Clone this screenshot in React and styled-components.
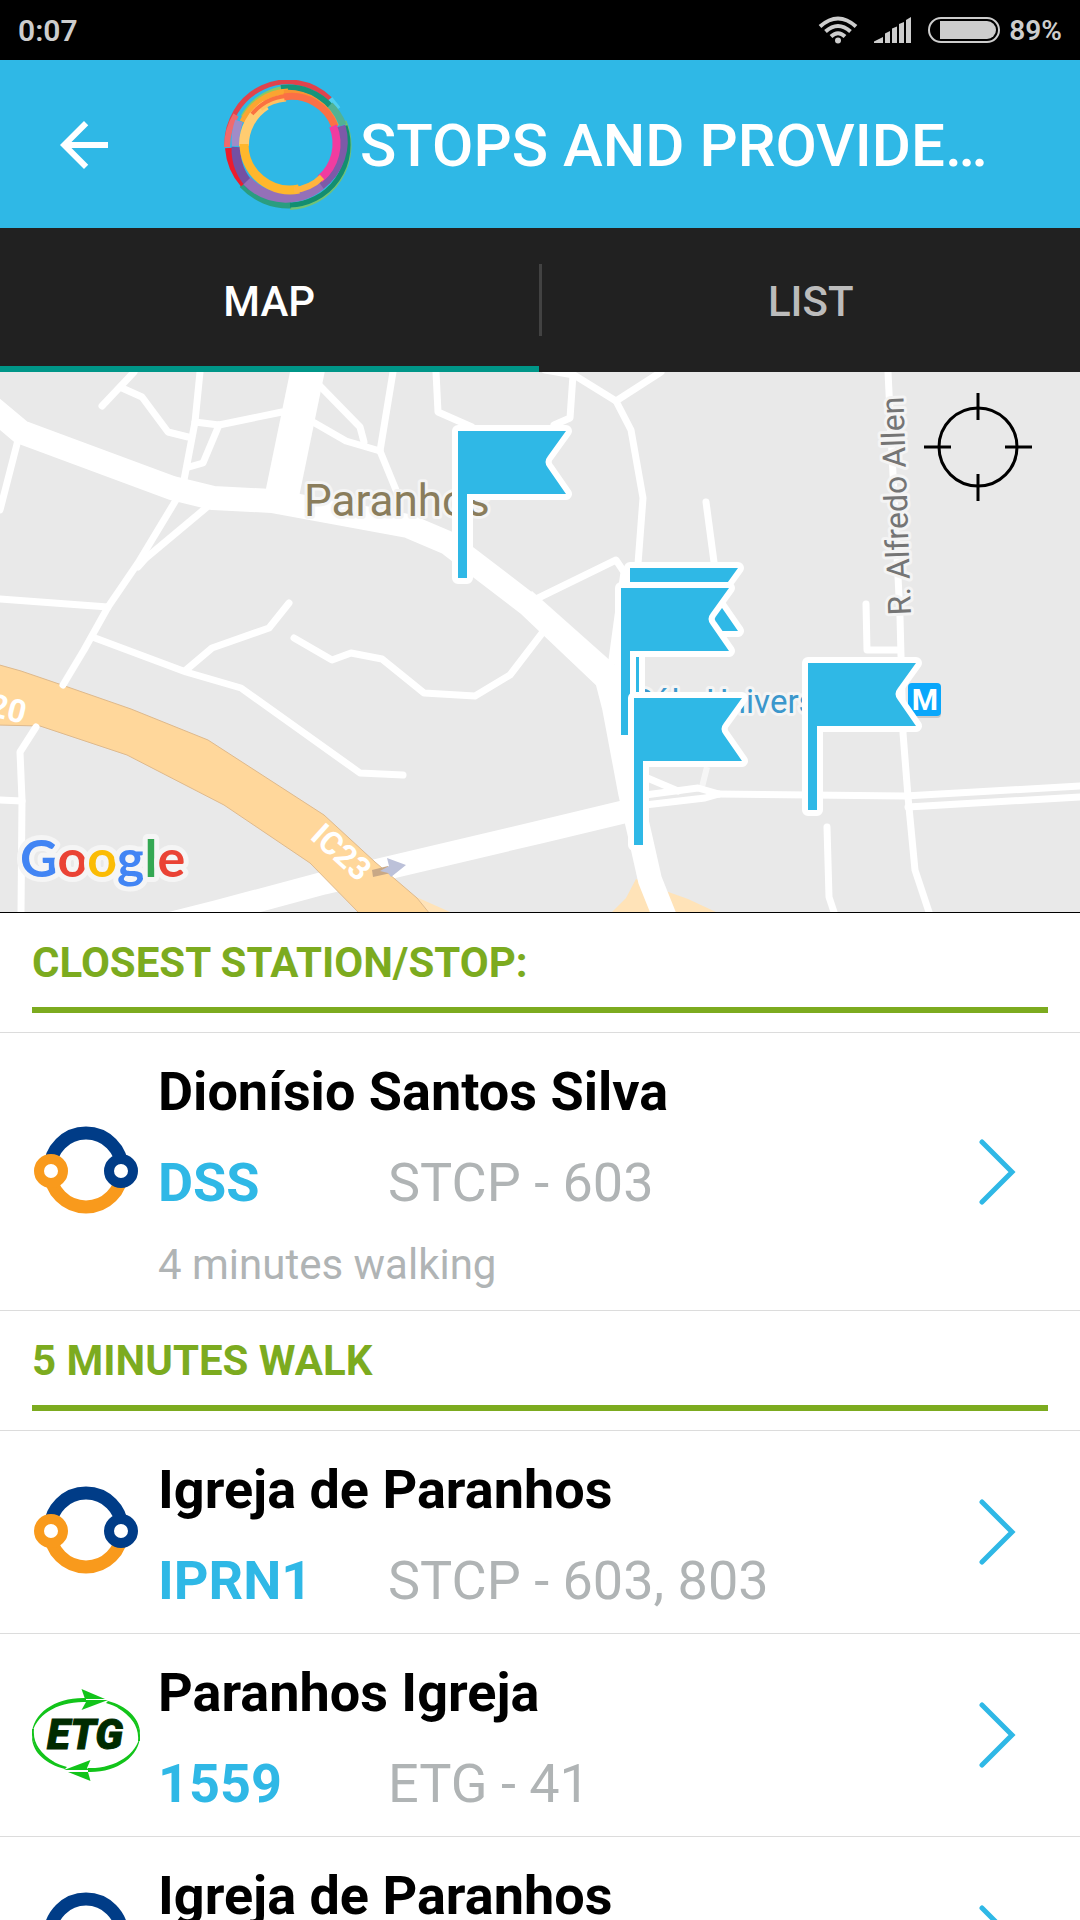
import React, { useState } from 'react';
import styled, { createGlobalStyle } from 'styled-components';

const GlobalStyle = createGlobalStyle`
  * {
    box-sizing: border-box;
  }

  body {
    margin: 0;
    background-color: #fff;
    font-family: Roboto, "Noto Sans", sans-serif;
  }

  button {
    margin: 0;
    padding: 0;
    border: none;
    background: none;
    font-family: inherit;
    cursor: pointer;
  }
`;

const FLAGS = [
  { x: 458, y: 59 },
  { x: 630, y: 196 },
  { x: 621, y: 216 },
  { x: 634, y: 326 },
  { x: 808, y: 291 },
];

// thin streets
const STREETS = [
  'M134 0L102 34',
  'M122 16L142 25L168 60L188 65',
  'M200 0L195 50L184 108',
  'M195 50L219 53L282 40',
  'M219 53L203 91L189 95',
  'M319 13L360 55L364 70',
  'M313 50L346 69L380 79',
  'M393 0L380 79L396 118',
  'M436 0L438 40L472 55',
  'M18 68L0 138',
  'M176 128L138 191L108 235L84 278L63 313',
  'M207 135L146 186L138 195',
  'M0 227L108 235',
  'M95 266L186 300L241 316L360 401L403 403',
  'M186 298L212 276L269 256L289 231',
  'M294 266L332 288L351 281L382 287L424 321L475 324L510 303L546 256',
  'M530 230L616 188L624 200L611 295',
  'M545 -2L574 3L616 29L631 58L643 126L638 192',
  'M616 29L661 0',
  'M573 3L570 46L554 53',
  'M706 130L714 190',
  'M888 0L900 245L903 361L908 425L915 498L929 540',
  'M866 232L867 278L900 278',
  'M827 455L829 525L834 540',
  'M716 422L905 424L1080 414',
  'M908 435L1080 425',
  'M645 405L678 419',
  'M645 423L698 416L719 422',
  'M645 433L705 426L719 422',
  'M36 355L20 380L22 428L21 540',
  'M0 428L22 429',
];

const SECTIONS = [
  {
    title: 'CLOSEST STATION/STOP:',
    stops: [
      {
        id: 'dss',
        provider: 'stcp',
        name: 'Dionísio Santos Silva',
        code: 'DSS',
        lines: 'STCP - 603',
        walk: '4 minutes walking',
      },
    ],
  },
  {
    title: '5 MINUTES WALK',
    stops: [
      { id: 'iprn1', provider: 'stcp', name: 'Igreja de Paranhos', code: 'IPRN1', lines: 'STCP - 603, 803' },
      { id: '1559', provider: 'etg', name: 'Paranhos Igreja', code: '1559', lines: 'ETG - 41' },
      { id: 'iprn2', provider: 'stcp', name: 'Igreja de Paranhos', code: 'IPRN2', lines: 'STCP - 603, 803' },
    ],
  },
];

const WifiIcon = () => (
  <svg width="40" height="28" viewBox="0 0 40 28" fill="none" stroke="#cdcdcd" strokeWidth="4">
    <path d="M2 10.500Q20 -5.500 38 10.500" />
    <path d="M7.500 15.500Q20 4.500 32.500 15.500" />
    <path d="M13 20.500Q20 14 27 20.500" />
    <circle cx="20" cy="24.500" r="3" fill="#cdcdcd" stroke="none" />
  </svg>
);

const SignalIcon = () => (
  <svg width="38" height="26" viewBox="0 0 38 26" fill="#cdcdcd">
    <path d="M0 26V24.500L9 20V26Z" />
    <path d="M11 26V16.500L16 14V26Z" />
    <path d="M18 26V11.500L23 9.500V26Z" />
    <path d="M25 26V7L30 5V26Z" />
    <path d="M32 26V3L37 0V26Z" />
  </svg>
);

const BatteryIcon = () => (
  <svg width="72" height="26" viewBox="0 0 72 26">
    <rect x="1" y="1" width="70" height="24" rx="12" fill="none" stroke="#cdcdcd" strokeWidth="2" />
    <path d="M12 4H59A9 9 0 0 1 59 22H12Z" fill="#cdcdcd" />
  </svg>
);

const BackIcon = () => (
  <svg width="72" height="72" viewBox="0 0 24 24" fill="#fff">
    <path d="M20 11H7.830l5.590-5.590L12 4l-8 8 8 8 1.410-1.410L7.830 13H20v-2z" />
  </svg>
);

const AppLogo = () => (
  <svg width="128" height="130" viewBox="0 0 128 130" fill="none">
    <path d="M66 128.500A63 63 0 0 0 121 41" stroke="#72c274" strokeWidth="3" />
    <path d="M19 104A62 62 0 0 0 67 124" stroke="#2a9d80" strokeWidth="9" />
    <path d="M66 125A60 60 0 0 0 121 46" stroke="#128e70" strokeWidth="5" />
    <path d="M3 67A61 62 0 0 1 106 19" stroke="#e0434c" strokeWidth="5" />
    <path d="M3 67A61 62 0 0 1 12 35" stroke="#f06a6c" strokeWidth="6" />
    <path d="M5 68A62 62 0 0 0 20 104" stroke="#ec1c2c" strokeWidth="8" />
    <path d="M106 19L114 29" stroke="#4fd0f0" strokeWidth="6" />
    <path d="M19 37A56 56 0 0 1 57 9" stroke="#8dc860" strokeWidth="5" />
    <path d="M57 8A57 57 0 0 1 108 28" stroke="#16947a" strokeWidth="6" />
    <path d="M106 25A57 57 0 0 1 119 45" stroke="#52b294" strokeWidth="7" />
    <path d="M15 41A55 55 0 0 0 12 66" stroke="#a08cc8" strokeWidth="8" />
    <path d="M12 67A54 54 0 0 0 28 107" stroke="#7450a2" strokeWidth="9" />
    <path d="M23 101A54 54 0 0 0 100 102" stroke="#9470b8" strokeWidth="10" />
    <path d="M97 105A54 54 0 0 0 117 46" stroke="#7d5aa8" strokeWidth="9" />
    <path d="M19 42A51 51 0 0 1 64 12" stroke="#fba531" strokeWidth="7" />
    <path d="M60 13A52 52 0 0 1 112 46" stroke="#f99432" strokeWidth="6" />
    <path d="M20 66A47 47 0 0 1 42 25" stroke="#ffcc70" strokeWidth="10" />
    <path d="M36 28A46 46 0 0 1 62 18" stroke="#ffc060" strokeWidth="7" />
    <path d="M28 34A50 50 0 0 1 72 16" stroke="#fb7240" strokeWidth="4" />
    <path d="M60 17A46 46 0 0 1 111 47" stroke="#fb7046" strokeWidth="7" />
    <path d="M20 64A46 46 0 0 0 75 109" stroke="#ffb72c" strokeWidth="9" />
    <path d="M109 46A46 46 0 0 1 96 99" stroke="#f03ca0" strokeWidth="8" />
    <path d="M70 110A46 46 0 0 0 98 97" stroke="#ffb43e" strokeWidth="6" />
  </svg>
);

const StcpLogo = () => (
  <svg width="108" height="92" viewBox="0 0 108 92" fill="none">
    <path d="M18 45A36 36 0 0 0 90 45" stroke="#f99a1c" strokeWidth="13" />
    <path d="M18 43A36 36 0 0 1 90 43" stroke="#003c87" strokeWidth="13" />
    <circle cx="19" cy="45" r="12" fill="#fff" stroke="#f99a1c" strokeWidth="10" />
    <circle cx="89" cy="45" r="12" fill="#fff" stroke="#003c87" strokeWidth="10" />
  </svg>
);

const EtgLogo = () => (
  <svg width="108" height="92" viewBox="0 0 108 92" fill="#12c41a">
    <path d="M0 46C0 24 24 8 54 9L54 13C26 12 3 26 0 46Z" />
    <path d="M49.500 0L73 10H53Z" />
    <path d="M52 11H76L49.500 21L54 13Z" />
    <path d="M76 12C95 17 109 30 108 46C106 31 94 20 74 14Z" />
    <path d="M108 46C108 68 84 84 56 83L56 79C82 80 105 66 108 46Z" />
    <path d="M58.500 92L36 83H56Z" />
    <path d="M57 81H32L58.500 71L55 79Z" />
    <path d="M33 80C13 75 -1 62 0 46C2 61 14 72 35 78Z" />
    <path d="M1 40Q-1 60 22 74M107 52Q109 32 86 18" fill="none" stroke="#12c41a" strokeWidth="2" />
    <LogoText x="15" y="60">ETG</LogoText>
  </svg>
);

const ChevronIcon = () => (
  <svg width="37" height="66" viewBox="0 0 37 66" fill="none" stroke="#2fb8e6" strokeWidth="5">
    <path d="M3 3L33 33L3 63" strokeLinecap="round" />
  </svg>
);

const TargetIcon = () => (
  <svg width="108" height="108" viewBox="0 0 108 108" fill="none" stroke="#000" strokeWidth="3">
    <circle cx="54" cy="54" r="39" />
    <path d="M54 0V27M54 81V108M0 54H27M81 54H108" />
  </svg>
);

const Flag = ({ x, y }) => (
  <FlagShape d={`M${x} ${y}h108l-18 25q-5 6 0 12l18 26h-99v84h-9z`} />
);

const CityMap = () => (
  <MapCanvas viewBox="0 0 1080 540" preserveAspectRatio="xMidYMid slice" role="img" aria-label="Map of Paranhos">
    <path d="M636 507L626 526L612 540H716L688 527L660 517Z" fill="#ffe3b8" />
    <g fill="none" stroke="#fff" strokeLinejoin="round">
      <path d="M140 559L216 540L324 511L540 460L640 436" strokeWidth="23" />
      <path d="M-10 34L21 60L172 116L213 126L272 129L408 154L448 171L529 233L608 308" strokeWidth="24" />
      <path d="M524 228L605 300L614 335L630 420L641 468L650 508L666 548" strokeWidth="24" />
      <path d="M309 -8L281 128" strokeWidth="34" />
      <path d="M707 395L702 415" stroke="#f6f6f6" strokeWidth="6" />
    </g>
    <path d="M414 524L450 540H424Z" fill="#ffe3b8" />
    <path
      d="M-4 292L21 299L62 313L131 337L208 368L324 443L375 490L417 526L430 542H360L310 491L224 433L127 383L40 354L-4 353Z"
      fill="#ffd79b"
      stroke="#deb98c"
    />
    <g fill="none" stroke="#fff" strokeWidth="7" strokeLinejoin="round" strokeLinecap="round">
      {STREETS.map((d) => (
        <path key={d} d={d} />
      ))}
    </g>
    <path d="M372 498L388 494L391 501L373 505Z" fill="#c8a886" />
    <path d="M387 486L406 493L391 505L388 501L380 499L389 494Z" fill="#bcc1d9" />

    <MapLabel x="304" y="144" $size={44} $color="#8a7d5c">Paranhos</MapLabel>
    <MapLabel transform="translate(911 243) rotate(-92)" $size={32} $color="#757575">R. Alfredo Allen</MapLabel>
    <MapLabel x="632" y="341" $size={33} $color="#3b97cc">Pólo Universitário</MapLabel>
    <RoadLabel transform="translate(23 352) rotate(14)" textAnchor="end">A20</RoadLabel>
    <RoadLabel transform="translate(309 466) rotate(42)">IC23</RoadLabel>
    <rect x="908" y="313" width="33" height="33" rx="4" fill="#c9c9c9" />
    <rect x="908" y="311" width="33" height="33" rx="4" fill="#0aa7fb" />
    <MetroText x="925" y="338" textAnchor="middle">M</MetroText>

    {FLAGS.map((flag) => (
      <Flag key={`${flag.x}-${flag.y}`} x={flag.x} y={flag.y} />
    ))}

    <BrandText x="20" y="505">
      <tspan fill="#4285f4">G</tspan>
      <tspan fill="#ea4335">o</tspan>
      <tspan fill="#fbbc05">o</tspan>
      <tspan fill="#4285f4">g</tspan>
      <tspan fill="#34a853">l</tspan>
      <tspan fill="#ea4335">e</tspan>
    </BrandText>
  </MapCanvas>
);

const StopRow = ({ stop }) => (
  <Row href={`#${stop.id}`}>
    {stop.provider === 'etg' ? <EtgLogo /> : <StcpLogo />}
    <StopInfo>
      <StopName>{stop.name}</StopName>
      <StopLine>
        <StopCode>{stop.code}</StopCode>
        <span>{stop.lines}</span>
      </StopLine>
      {stop.walk && <WalkTime>{stop.walk}</WalkTime>}
    </StopInfo>
    <ChevronIcon />
  </Row>
);

const App = () => {
  const [tab, setTab] = useState('map');

  return (
    <Screen>
      <GlobalStyle />
      <StatusBar>
        <Clock>0:07</Clock>
        <StatusIcons>
          <WifiIcon />
          <SignalIcon />
          <BatteryIcon />
        </StatusIcons>
        <BatteryLevel>89%</BatteryLevel>
      </StatusBar>

      <Header>
        <BackButton type="button" aria-label="Back">
          <BackIcon />
        </BackButton>
        <AppLogo />
        <Title>STOPS AND PROVIDERS</Title>
      </Header>

      <Tabs>
        <Tab type="button" $active={tab === 'map'} onClick={() => setTab('map')}>MAP</Tab>
        <TabDivider />
        <Tab type="button" $active={tab === 'list'} onClick={() => setTab('list')}>LIST</Tab>
      </Tabs>

      <MapPanel>
        <CityMap />
        <LocateButton type="button" aria-label="Locate me">
          <TargetIcon />
        </LocateButton>
      </MapPanel>

      <StopList>
        {SECTIONS.map((section) => (
          <section key={section.title}>
            <SectionHeader>
              <SectionTitle>{section.title}</SectionTitle>
            </SectionHeader>
            {section.stops.map((stop) => (
              <StopRow key={stop.id} stop={stop} />
            ))}
          </section>
        ))}
      </StopList>
    </Screen>
  );
};

const Screen = styled.div`
  height: 100vh;
  display: flex;
  flex-direction: column;
  overflow: hidden;
`;

const StatusBar = styled.div`
  flex: none;
  height: 60px;
  padding: 0 18px;
  display: flex;
  align-items: center;
  background-color: #000;
  color: #cdcdcd;
  font-weight: 600;
`;

const Clock = styled.span`
  flex: 1;
  font-size: 30px;
`;

const StatusIcons = styled.div`
  display: flex;
  align-items: center;
  gap: 16px;
  margin-right: 9px;
`;

const BatteryLevel = styled.span`
  font-size: 28px;
`;

const Header = styled.header`
  flex: none;
  height: 168px;
  padding: 2px 90px 0 48px;
  display: flex;
  align-items: center;
  background-color: #2fb8e6;
`;

const BackButton = styled.button`
  width: 72px;
  height: 72px;
  margin-right: 104px;
`;

const Title = styled.h1`
  flex: 1;
  min-width: 0;
  margin: 0;
  padding-left: 8px;
  overflow: hidden;
  text-overflow: ellipsis;
  white-space: nowrap;
  color: #fff;
  font-size: 60px;
  font-weight: 500;
`;

const Tabs = styled.nav`
  flex: none;
  height: 144px;
  display: flex;
  align-items: center;
  background-color: #212121;
`;

const Tab = styled.button`
  flex: 1;
  height: 144px;
  border-top: 8px solid transparent;
  border-bottom: 6px solid ${(props) => (props.$active ? '#009688' : 'transparent')};
  color: ${(props) => (props.$active ? '#fff' : '#bcbcbc')};
  font-size: 42px;
  font-weight: 500;
`;

const TabDivider = styled.div`
  width: 3px;
  height: 72px;
  background-color: #424242;
`;

const MapPanel = styled.div`
  position: relative;
  flex: none;
  height: 541px;
  border-bottom: 1px solid #000;
  background-color: #e9e9e9;
`;

const MapCanvas = styled.svg`
  display: block;
  width: 100%;
  height: 540px;
`;

const FlagShape = styled.path`
  fill: #2fb8e6;
  stroke: #fff;
  stroke-width: 12px;
  stroke-linejoin: round;
  paint-order: stroke;
`;

const MapLabel = styled.text`
  fill: ${(props) => props.$color};
  font-size: ${(props) => props.$size}px;
  stroke: #f4f4f4;
  stroke-width: 6px;
  stroke-linejoin: round;
  paint-order: stroke;
`;

const RoadLabel = styled.text`
  fill: #fff;
  font-size: 32px;
  font-weight: bold;
`;

const MetroText = styled.text`
  fill: #fff;
  font-size: 30px;
  font-weight: bold;
`;

const BrandText = styled.text`
  font-family: Lato, sans-serif;
  font-size: 52px;
  font-weight: bold;
  stroke: #f5f5f5;
  stroke-width: 10px;
  stroke-linejoin: round;
  paint-order: stroke;
`;

const LogoText = styled.text`
  fill: #002b00;
  stroke: #002b00;
  stroke-width: 1px;
  font-size: 42px;
  font-style: italic;
  font-weight: 900;
`;

const LocateButton = styled.button`
  position: absolute;
  top: 21px;
  right: 48px;
  width: 108px;
  height: 108px;
`;

const StopList = styled.main`
  flex: 1;
  min-height: 0;
  overflow-y: auto;
  scrollbar-width: none;
`;

const SectionHeader = styled.div`
  padding: 25px 32px 19px;
  border-bottom: 1px solid #dcdcdc;
`;

const SectionTitle = styled.h2`
  margin: 0;
  padding-bottom: 19px;
  border-bottom: 6px solid #7cab1f;
  color: #7cab1f;
  font-size: 42px;
  font-weight: bold;
  line-height: 50px;
`;

const Row = styled.a`
  display: flex;
  align-items: center;
  gap: 18px;
  padding: 20px 64px 20px 32px;
  border-bottom: 1px solid #dcdcdc;
  color: #b0b4b5;
  text-decoration: none;

  > svg {
    flex: none;
  }
`;

const StopInfo = styled.div`
  flex: 1;
  min-width: 0;
  padding-top: 7px;
`;

const StopName = styled.h3`
  margin: 0 0 27px;
  color: #000;
  font-size: 54px;
  font-weight: bold;
  line-height: 64px;
`;

const StopLine = styled.div`
  display: flex;
  font-size: 54px;
  line-height: 64px;
`;

const StopCode = styled.strong`
  width: 230px;
  color: #2fb8e6;
`;

const WalkTime = styled.p`
  margin: 25px 0 0;
  font-size: 42px;
  line-height: 50px;
`;

export default App;
